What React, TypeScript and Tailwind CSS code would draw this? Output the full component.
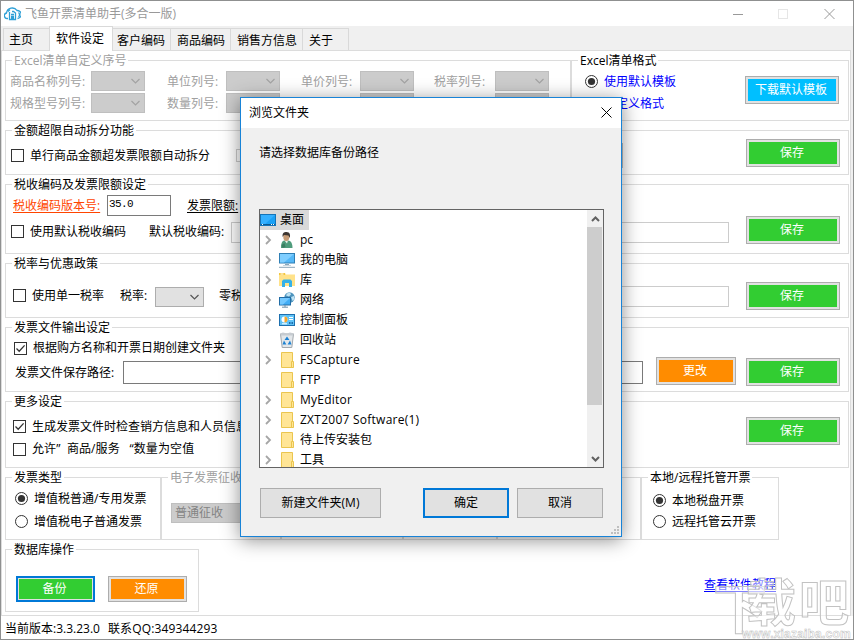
import type { ReactNode } from 'react';
import clsx from 'clsx';

function Group({
  title,
  className,
  disabled,
  children,
}: {
  title?: string;
  className?: string;
  disabled?: boolean;
  children?: ReactNode;
}) {
  return (
    <section className={clsx('flex flex-col border border-[#dcdcdc]', className)}>
      <div className="-mt-[9px] flex h-4 shrink-0">
        {title && (
          <h2
            className={clsx(
              'ml-[6px] h-4 bg-white px-[2px] leading-[18px]',
              disabled ? 'text-[#a0a0a0]' : 'text-black',
            )}
          >
            {title}
          </h2>
        )}
      </div>
      <div className="flex min-h-0 flex-1">{children}</div>
    </section>
  );
}

function ColorButton({
  label,
  fill,
  className,
  focused,
}: {
  label: string;
  fill: string;
  className?: string;
  focused?: boolean;
}) {
  return (
    <button
      className={clsx(
        'shrink-0',
        focused ? 'border-2 border-[#0078d7] p-px' : 'border border-[#adadad] p-[2px]',
        'bg-[#e1e1e1]',
        className,
      )}
    >
      <span className={clsx('flex h-full items-center justify-center pr-[2px] pb-px text-white', fill)}>
        {label}
      </span>
    </button>
  );
}

function SaveButton({ className }: { className?: string }) {
  return <ColorButton label="保存" fill="bg-[#32cd32]" className={clsx('mr-[8px] h-[28px] w-[94px]', className)} />;
}

function CheckBox({ checked, disabled }: { checked?: boolean; disabled?: boolean }) {
  return (
    <span
      className={clsx(
        'flex h-[13px] w-[13px] shrink-0 items-center justify-center border bg-white',
        disabled ? 'border-[#cccccc]' : 'border-[#333333]',
      )}
    >
      {checked && (
        <svg width="11" height="11" viewBox="0 0 11 11" fill="none" stroke="#333" strokeWidth="1.3">
          <path d="M1.5 5.5 L4.2 8.2 L9.6 2.4" />
        </svg>
      )}
    </span>
  );
}

function Radio({ checked }: { checked?: boolean }) {
  return (
    <svg width="13" height="13" viewBox="0 0 13 13" className="shrink-0">
      <circle cx="6.5" cy="6.5" r="6" fill="#fff" stroke="#333" />
      {checked && <circle cx="6.5" cy="6.5" r="3.6" fill="#333" />}
    </svg>
  );
}

function Combo({ className, disabled, text }: { className?: string; disabled?: boolean; text?: string }) {
  return (
    <span
      className={clsx(
        'flex h-5 shrink-0 items-center justify-end border pr-[4px]',
        disabled ? 'border-[#bfbfbf] bg-[#cccccc]' : 'border-[#adadad] bg-[#e1e1e1]',
        className,
      )}
    >
      {text && <span className="mr-auto pl-[3px] text-[#838383]">{text}</span>}
      <svg width="9" height="6" viewBox="0 0 9 6" fill="none" stroke={disabled ? '#a3a3a3' : '#555'} strokeWidth="1.2">
        <path d="M0.5 1 L4.5 5 L8.5 1" />
      </svg>
    </span>
  );
}

const columnRows = [
  ['商品名称列号:', '单位列号:', '单价列号:', '税率列号:'],
  ['规格型号列号:', '数量列号:', '', ''],
];

function Tabs() {
  const rest = [
    { label: '客户编码', width: 'w-[58px]' },
    { label: '商品编码', width: 'w-[60px]' },
    { label: '销售方信息', width: 'w-[72px]' },
    { label: '关于', width: 'w-[46px]' },
  ];
  return (
    <nav className="flex h-[24px] shrink-0 items-end bg-[#f0f0f0] pl-[2px]">
      <div className="h-[22px] w-[46px] border-t border-l border-[#d9d9d9] pl-[5px] leading-[22px]">主页</div>
      <div className="relative z-10 -mb-px h-[25px] w-[64px] border border-b-0 border-[#d9d9d9] bg-white pl-[6px] leading-[23px]">
        软件设定
      </div>
      {rest.map((t) => (
        <div
          key={t.label}
          className={clsx(
            'h-[22px] border-t border-r border-[#d9d9d9] leading-[23px]',
            t.label === '客户编码' ? 'pl-[4px]' : 'pl-[6px]',
            t.width,
          )}
        >
          {t.label}
        </div>
      ))}
    </nav>
  );
}

function ExcelRow() {
  return (
    <div className="flex h-[61px] w-[844px]">
      <Group title="Excel清单自定义序号" disabled className="w-[566px]">
        <div className="flex flex-col gap-[2px] pt-[3px] pl-[4px] text-[#a0a0a0]">
          {columnRows.map((row, i) => (
            <div key={i} className="grid h-5 grid-cols-[81px_76px_59px_75px_59px_74px_61px_54px] items-center">
              {row.map((label, j) => [
                <span key={'l' + j} className="pt-px">{label}</span>,
                <Combo key={'c' + j} disabled className="w-[54px]" />,
              ])}
            </div>
          ))}
        </div>
      </Group>
      <Group title="Excel清单格式" className="w-[278px]">
        <div className="flex flex-1 flex-col gap-[2px] pt-[3px] pl-[13px] text-[#0000ff]">
          <div className="flex h-5 items-center gap-[6px]">
            <Radio checked />
            <span className="pt-[2px]">使用默认模板</span>
          </div>
          <div className="flex h-5 items-center gap-[6px]">
            <Radio />
            <span className="pt-[2px]">自定义格式</span>
          </div>
        </div>
        <ColorButton label="下载默认模板" fill="bg-[#00bfff]" className="mt-[8px] mr-[9px] h-[28px] w-[94px]" />
      </Group>
    </div>
  );
}

function Settings() {
  return (
    <main className="flex h-[566px] w-[850px] shrink-0 flex-col gap-[9px] border border-[#dcdcdc] bg-white pt-[9px] pl-[3px]">
      <ExcelRow />

      <Group title="金额超限自动拆分功能" className="h-[45px] w-[844px]">
        <div className="mt-[7px] flex h-5 flex-1 items-center gap-[6px] pl-[5px]">
          <CheckBox />
          <span className="w-[200px] pt-[2px]">单行商品金额超发票限额自动拆分</span>
          <CheckBox disabled />
          <span className="ml-[40px] h-[25px] w-[328px] border border-[#bfbfbf] bg-[#cccccc]" />
        </div>
        <SaveButton className="mt-px" />
      </Group>

      <Group title="税收编码及发票限额设定" className="h-[70px] w-[844px]">
        <div className="flex-1">
          <div className="mt-[3px] flex h-[21px] items-center pl-[7px]">
            <a className="w-[94px] pt-px text-[#ff4500] underline underline-offset-2">税收编码版本号:</a>
            <span className="h-[21px] w-[64px] border border-[#7a7a7a] bg-white pl-px font-['Liberation_Mono'] text-[11px] leading-[17px] tracking-[-0.6px]">
              35.0
            </span>
            <a className="ml-[16px] pt-px underline underline-offset-2">发票限额:</a>
          </div>
          <div className="mt-[6px] flex h-[21px] items-start pl-[5px]">
            <div className="flex h-[19px] items-center">
              <CheckBox />
              <span className="ml-[6px] w-[119px]">使用默认税收编码</span>
            </div>
            <span className="w-[82px] pt-[2px]">默认税收编码:</span>
            <span className="h-[21px] w-[498px] border border-[#cccccc]" />
          </div>
        </div>
        <SaveButton className="mt-[24px]" />
      </Group>

      <Group title="税率与优惠政策" className="h-[55px] w-[844px]">
        <div className="mt-[15px] flex h-[21px] flex-1 items-start pl-[7px]">
          <div className="flex h-[19px] items-center">
            <CheckBox />
            <span className="ml-[6px] w-[88px]">使用单一税率</span>
            <span className="w-[35px]">税率:</span>
          </div>
          <Combo className="mt-px w-[49px]" />
          <span className="ml-[15px] pt-[2px]">零税率:</span>
          <span className="mr-[17px] ml-auto h-[21px] w-[200px] border border-[#cccccc]" />
        </div>
        <SaveButton className="mt-[11px]" />
      </Group>

      <Group title="发票文件输出设定" className="h-[65px] w-[844px]">
        <div className="flex-1">
          <div className="mt-[3px] flex h-5 items-center gap-[6px] pl-[8px]">
            <CheckBox checked />
            根据购方名称和开票日期创建文件夹
          </div>
          <div className="mt-[3px] flex h-[23px] items-center pl-[9px]">
            <span className="w-[108px]">发票文件保存路径:</span>
            <span className="h-[23px] w-[520px] border border-[#7a7a7a]" />
          </div>
        </div>
        <ColorButton label="更改" fill="bg-[#ff8c00]" className="mt-[22px] mr-[10px] h-[28px] w-[80px]" />
        <SaveButton className="mt-[23px]" />
      </Group>

      <Group title="更多设定" className="h-[67px] w-[844px]">
        <div className="flex-1 pl-[7px]">
          <div className="mt-[7px] flex h-5 items-center gap-[6px]">
            <CheckBox checked />
            <span className="pt-px">生成发票文件时检查销方信息和人员信息</span>
          </div>
          <div className="mt-[3px] flex h-5 items-center gap-[6px]">
            <CheckBox />
            <span className="tracking-[0.1px]">允许”&nbsp; 商品/服务&nbsp;&nbsp; “数量为空值</span>
          </div>
        </div>
        <SaveButton className="mt-[8px]" />
      </Group>

      <div className="flex h-[63px]">
        <Group title="发票类型" className="w-[156px]">
          <div className="mt-[3px] flex flex-col gap-[3px] pl-[9px]">
            <div className="flex h-5 items-center gap-[6px]">
              <Radio checked />
              <span className="pt-[2px]">增值税普通/专用发票</span>
            </div>
            <div className="flex h-5 items-center gap-[6px]">
              <Radio />
              <span className="pt-[2px]">增值税电子普通发票</span>
            </div>
          </div>
        </Group>
        <Group title="电子发票征收方式" disabled className="w-[120px]">
          <Combo disabled text="普通征收" className="mt-[18px] ml-[9px] w-[100px]" />
        </Group>
        <Group className="w-[122px]" />
        <Group className="w-[94px]" />
        <Group className="w-[144px]" />
        <Group title="本地/远程托管开票" className="w-[138px]">
          <div className="mt-[5px] flex flex-col gap-px pl-[11px]">
            <div className="flex h-5 items-center gap-[6px]">
              <Radio checked />
              <span className="pt-px">本地税盘开票</span>
            </div>
            <div className="flex h-5 items-center gap-[6px]">
              <Radio />
              <span className="pt-px">远程托管云开票</span>
            </div>
          </div>
        </Group>
      </div>

      <div className="flex h-[63px]">
        <Group title="数据库操作" className="w-[194px]">
          <div className="mt-[19px] flex gap-[13px] pl-[10px]">
            <ColorButton label="备份" fill="bg-[#32cd32]" focused className="h-[26px] w-[79px]" />
            <ColorButton label="还原" fill="bg-[#ff8c00]" className="h-[26px] w-[79px]" />
          </div>
        </Group>
        <a className="mt-[26px] ml-[505px] h-5 leading-5 text-[#0000ff] underline underline-offset-2">查看软件教程</a>
      </div>
    </main>
  );
}

/* ---- tree icons ---- */

function DesktopIcon() {
  return (
    <svg width="16" height="16" viewBox="0 0 16 16">
      <rect x="0.5" y="2.5" width="15" height="11" fill="#1ba1f5" stroke="#1574b8" />
      <path d="M1 3h14L4 13H1z" fill="#35b0ff" />
      <path d="M1 12.5h14" stroke="#0b5a94" />
      <path d="M2 12.5h1M11 12.5h1M13 12.5h1" stroke="#fff" />
    </svg>
  );
}

function UserIcon() {
  return (
    <svg width="16" height="16" viewBox="0 0 16 16">
      <path d="M2 16c0-5 1-7.500 4-7.500h3c3 0 4.500 3 4.500 7.500z" fill="#4f9c7c" />
      <path d="M5.500 8.500l2.500 3 1-3z" fill="#e9f2ee" />
      <ellipse cx="7.300" cy="5" rx="3" ry="4" fill="#c79c76" />
      <path d="M3.700 5C3 1 5 0 7.500 0 11 0 11.500 3 10.800 6L9.500 3.500 5 3z" fill="#3e3631" />
      <path d="M2.500 13l3-2 1 4-3 1z" fill="#3b7f63" />
    </svg>
  );
}

function ComputerIcon() {
  return (
    <svg width="16" height="16" viewBox="0 0 16 16">
      <rect x="0.500" y="1.500" width="15" height="9.500" fill="#55b8f7" stroke="#2f7fb5" />
      <path d="M1 2h14L5 10.500H1z" fill="#7fceff" />
      <path d="M6 12h4v1H6z" fill="#8ba6b8" />
      <path d="M0 15.300h16" stroke="#8ba6b8" />
      <path d="M4 13.500h8" stroke="#c5d5df" />
    </svg>
  );
}

function LibraryIcon() {
  return (
    <svg width="16" height="16" viewBox="0 0 16 16">
      <path d="M0 1h6l1 1.500h9V14H0z" fill="#ffe28a" />
      <path d="M0 1h6v2H0z" fill="#f3c63c" />
      <path d="M1.500 2h3" stroke="#fff" />
      <path d="M3 15V9l1.500-1.500h7L13 9v6h-3v-4H6v4z" fill="#35b1e8" />
    </svg>
  );
}

function NetworkIcon() {
  return (
    <svg width="16" height="16" viewBox="0 0 16 16">
      <circle cx="10.500" cy="5.500" r="5.200" fill="#4c93bd" />
      <path d="M8 1.500l3-1 1 2-2 2-3-1zM12 5l3-1 .5 3-2 2z" fill="#c0e3f3" />
      <rect x="0.500" y="5.500" width="11" height="7.500" fill="#42adf5" stroke="#226da6" />
      <path d="M1 6h10L4 12.500H1z" fill="#73c8ff" />
      <path d="M3 15.200h6M6 13v2" stroke="#6f90a7" />
    </svg>
  );
}

function ControlPanelIcon() {
  return (
    <svg width="16" height="16" viewBox="0 0 16 16">
      <rect x="0.500" y="2.500" width="15" height="11" fill="#5fc3f8" stroke="#1d6fae" />
      <circle cx="5.500" cy="7.500" r="3" fill="#fff" />
      <path d="M5.500 7.500V4.500A3 3 0 0 1 5.500 10.500z" fill="#f4a62a" />
      <path d="M10 5.500h4M10 7.500h4M3 11.800h5" stroke="#fff" />
      <path d="M10 10h1.500v2H10zM12.500 10H14v2h-1.500z" fill="#1d6fae" />
    </svg>
  );
}

function RecycleIcon() {
  return (
    <svg width="16" height="16" viewBox="0 0 16 16">
      <path d="M1.500 2h13L12.800 15.500H3.200z" fill="#e3e7ea" stroke="#a2a8ad" />
      <path d="M1 1.500l3-1 4 1 3-1 4 1-1 2H2z" fill="#c6cbd0" />
      <path d="M8 4.500l2.500 3.500H5.500zM5 8.500L7.400 12.500H3.500zM11 8.500l1.500 4H8.600z" fill="#1d82d2" />
    </svg>
  );
}

function FolderIcon() {
  return (
    <svg width="16" height="16" viewBox="0 0 16 16">
      <path d="M2.500 0.500h11v10h.5v5H2.500z" fill="#ffe596" stroke="#eac54f" />
      <path d="M12.500 15.500V9.500h2v6z" fill="#ffe596" stroke="#eac54f" />
    </svg>
  );
}

const tree = [
  { label: 'pc', icon: UserIcon, expand: true },
  { label: '我的电脑', icon: ComputerIcon, expand: true },
  { label: '库', icon: LibraryIcon, expand: true },
  { label: '网络', icon: NetworkIcon, expand: true },
  { label: '控制面板', icon: ControlPanelIcon, expand: true },
  { label: '回收站', icon: RecycleIcon, expand: false },
  { label: 'FSCapture', icon: FolderIcon, expand: true, latin: true },
  { label: 'FTP', icon: FolderIcon, expand: false, latin: true },
  { label: 'MyEditor', icon: FolderIcon, expand: true, latin: true },
  { label: 'ZXT2007 Software(1)', icon: FolderIcon, expand: true, latin: true },
  { label: '待上传安装包', icon: FolderIcon, expand: true },
  { label: '工具', icon: FolderIcon, expand: true },
];

function FolderTree() {
  return (
    <div className="ml-[18px] flex h-[259px] w-[345px] border border-[#646464] bg-white">
      <ul className="flex-1 overflow-hidden">
        <li className="flex h-5 w-[49px] items-center gap-[4px] bg-[#d9d9d9]">
          <DesktopIcon />
          <span>桌面</span>
        </li>
        {tree.map(({ label, icon: Icon, expand, latin }) => (
          <li key={label} className="flex h-5 items-center pl-[5px]">
            <span className="w-[14px]">
              {expand && (
                <svg width="7" height="10" viewBox="0 0 7 10" fill="none" stroke="#a6a6a6" strokeWidth="1.800">
                  <path d="M1 1l4 4-4 4" />
                </svg>
              )}
            </span>
            <Icon />
            <span className={clsx('ml-[5px] whitespace-nowrap', latin && 'tracking-[0.25px]')}>{label}</span>
          </li>
        ))}
      </ul>
      <div className="flex w-[16px] shrink-0 flex-col bg-[#f0f0f0]">
        <span className="flex h-[17px] items-center justify-center">
          <svg width="9" height="6" viewBox="0 0 9 6" fill="none" stroke="#606060" strokeWidth="2">
            <path d="M1 5l3.500-3.500L8 5" />
          </svg>
        </span>
        <span className="mr-px h-[178px] bg-[#cdcdcd]" />
        <span className="mt-auto flex h-[17px] items-center justify-center">
          <svg width="9" height="6" viewBox="0 0 9 6" fill="none" stroke="#606060" strokeWidth="2">
            <path d="M1 1l3.500 3.500L8 1" />
          </svg>
        </span>
      </div>
    </div>
  );
}

function BrowseDialog() {
  return (
    <div className="absolute top-[96px] left-[239px] z-20 flex h-[440px] w-[382px] flex-col border border-[#1883d7] bg-[#f0f0f0] shadow-[0_3px_18px_rgba(0,0,0,0.45)]">
      <header className="flex h-[30px] shrink-0 items-center justify-between bg-white pr-[9px] pl-[8px]">
        <span>浏览文件夹</span>
        <svg width="11" height="11" viewBox="0 0 11 11" stroke="#000" className="-mt-px">
          <path d="M0.500 0.500l10 10M10.500 0.500l-10 10" />
        </svg>
      </header>
      <p className="mt-[14px] mb-[47px] ml-[18px] h-5 leading-[22px]">请选择数据库备份路径</p>
      <FolderTree />
      <footer className="mt-[20px] ml-[19px] flex h-[30px]">
        <button className="w-[121px] border border-[#adadad] bg-[#e1e1e1]">新建文件夹(M)</button>
        <button className="ml-[42px] w-[86px] border-2 border-[#0078d7] bg-[#e1e1e1]">确定</button>
        <button className="ml-[8px] w-[86px] border border-[#adadad] bg-[#e1e1e1]">取消</button>
      </footer>
      <svg width="8" height="8" viewBox="0 0 8 8" fill="#bfbfbf" className="mt-auto mr-[2px] mb-[2px] ml-auto">
        <path d="M6 0h2v2H6zM3 3h2v2H3zM6 3h2v2H6zM0 6h2v2H0zM3 6h2v2H3zM6 6h2v2H6z" />
      </svg>
    </div>
  );
}

function TitleBar() {
  return (
    <header className="flex h-[25px] shrink-0 items-center bg-white pl-[3px]">
      <svg width="17" height="15" viewBox="0 0 17 15" fill="none" stroke="#2d9fd6" strokeWidth="1.300">
        <path d="M4 12.500H3.500A2.800 2.800 0 0 1 2.500 7 5.800 5.800 0 0 1 13 4.500 4 4 0 0 1 13.500 12.500" />
        <path d="M5.500 6v7.500h6V7l-2-1.500H8M7 8.500h3M7 10.500h3M7 12h3M14.500 6.500a3 3 0 0 1 0 4.500M4 5.500l2-2" />
      </svg>
      <h1 className="ml-[4px] text-[#999999]">飞鱼开票清单助手(多合一版)</h1>
      <svg width="104" height="12" viewBox="0 0 104 12" fill="none" stroke="#999" className="mr-[18px] ml-auto">
        <path d="M2 6.500h10M93.500 1l10 10M103.500 1l-10 10" />
        <rect x="47.500" y="1.500" width="9" height="9" stroke="#e6e6e6" />
      </svg>
    </header>
  );
}

function Watermark() {
  return (
    <div className="pointer-events-none absolute right-0 bottom-0 h-[60px] w-[136px] font-bold text-white/50 select-none [-webkit-text-stroke:1px_#c2c2c2]">
      <span className="absolute top-0 -left-[4px] text-[54px] leading-[58px]">下</span>
      <span className="absolute -top-[2px] left-[29px] text-[50px] leading-[50px] tracking-[3px]">载吧</span>
      <span className="absolute bottom-[-2px] left-[25px] font-['Liberation_Sans'] text-[12px] leading-[14px] tracking-[0.2px] [-webkit-text-stroke:0.5px_#bdbdbd]">
        www.xiazaiba.com
      </span>
    </div>
  );
}

export default function App() {
  return (
    <div className="relative flex h-[640px] w-[854px] flex-col overflow-hidden border border-[#8f9090] bg-[#f0f0f0] font-['Open_Sans','Noto_Sans_CJK_SC',sans-serif] text-[12px] leading-4 text-black">
      <TitleBar />
      <Tabs />
      <Settings />
      <footer className="flex flex-1 items-center gap-[8px] bg-white pt-[2px] pl-[4px]">
        <span>当前版本:3.3.23.0</span>
        <span className="tracking-[0.15px]">联系QQ:349344293</span>
      </footer>
      <BrowseDialog />
      <Watermark />
    </div>
  );
}
